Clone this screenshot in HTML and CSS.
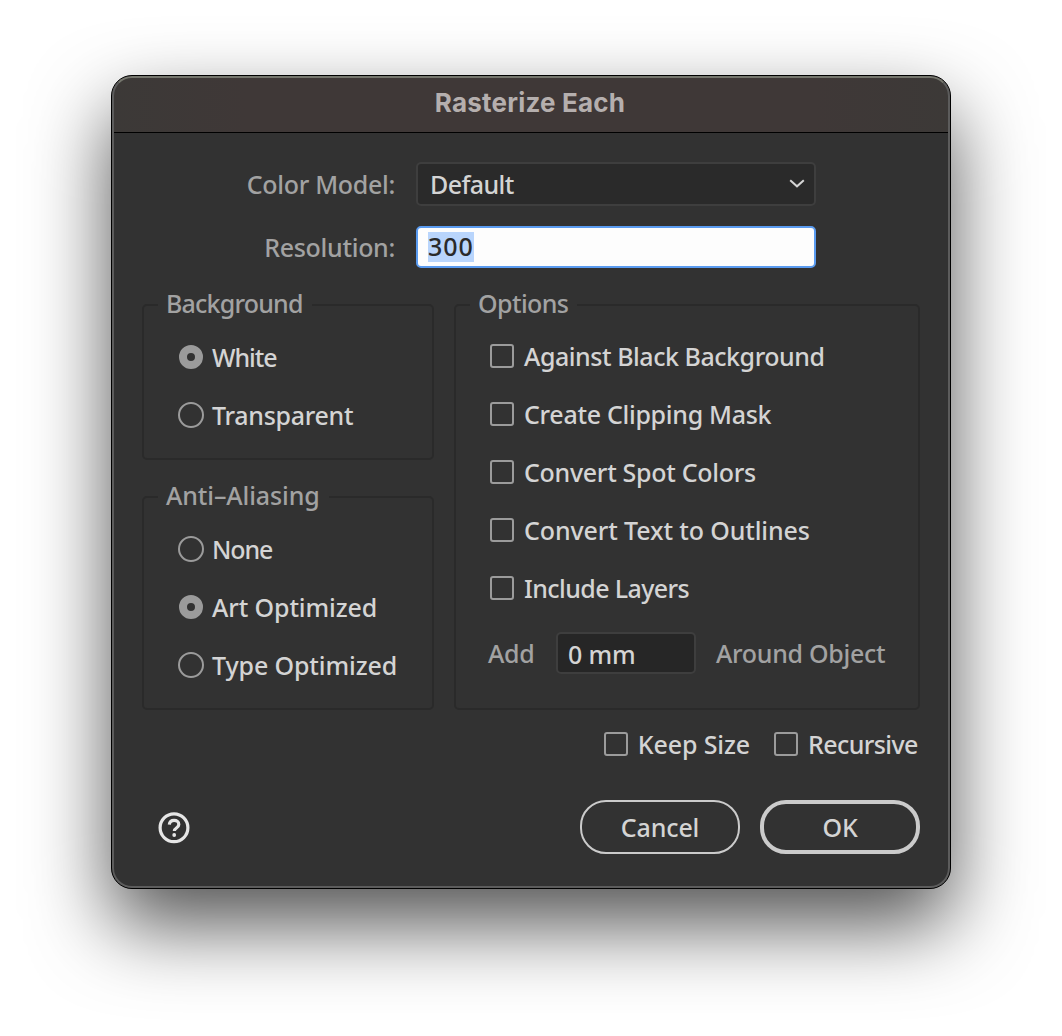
FILE: index.html
```html
<!DOCTYPE html>
<html lang="en">
<head>
<meta charset="utf-8">
<title>Rasterize Each</title>
<link rel="stylesheet" href="styles.css">
</head>
<body>
<main class="dialog">
  <header class="titlebar"><h1 class="title">Rasterize Each</h1></header>
  <form class="content">
    <div class="field">
      <span class="field-label">Color Model:</span>
      <div class="select"><span class="tighter">Default</span>
        <svg class="chevron" viewBox="0 0 16 10" width="16" height="10"><path d="M1.200 1.200 8 7.300 14.800 1.200"/></svg>
      </div>
    </div>
    <div class="field field-resolution">
      <span class="field-label">Resolution:</span>
      <div class="input input-focused"><span class="selection">300</span></div>
    </div>
    <div class="groups">
      <div class="column">
        <fieldset class="group group-background">
          <legend class="tightest">Background</legend>
          <label class="row"><i class="radio radio-on"></i><span class="narrow">White</span></label>
          <label class="row"><i class="radio"></i><span>Transparent</span></label>
        </fieldset>
        <fieldset class="group group-aliasing">
          <legend class="even">Anti–Aliasing</legend>
          <label class="row"><i class="radio"></i><span class="narrow">None</span></label>
          <label class="row"><i class="radio radio-on"></i><span class="even">Art Optimized</span></label>
          <label class="row"><i class="radio"></i><span class="even">Type Optimized</span></label>
        </fieldset>
      </div>
      <fieldset class="group group-options">
        <legend class="tighter">Options</legend>
        <label class="row"><i class="check"></i><span class="tight">Against Black Background</span></label>
        <label class="row"><i class="check"></i><span>Create Clipping Mask</span></label>
        <label class="row"><i class="check"></i><span>Convert Spot Colors</span></label>
        <label class="row"><i class="check"></i><span class="even">Convert Text to Outlines</span></label>
        <label class="row"><i class="check"></i><span class="tighter">Include Layers</span></label>
        <div class="padding-row">
          <span class="add">Add</span>
          <div class="input input-size even">0 mm</div>
          <span class="around">Around Object</span>
        </div>
      </fieldset>
    </div>
    <div class="extras">
      <label class="extra"><i class="check"></i><span class="even">Keep Size</span></label>
      <label class="extra"><i class="check"></i><span class="tighter recursive">Recursive</span></label>
    </div>
    <footer class="actions">
      <svg class="help" viewBox="0 0 34 34" width="34" height="34"><circle cx="17" cy="17.800" r="13.900"/><path d="M12.300 14.600c.3-2.900 2.200-4.200 4.800-4.200 2.700 0 4.700 1.500 4.700 4 0 3.800-4.500 3.300-4.500 6.600"/><circle class="dot" cx="17.200" cy="25" r="1.900"/></svg>
      <div class="button even">Cancel</div>
      <div class="button button-primary even">OK</div>
    </footer>
  </form>
</main>
</body>
</html>
```
FILE: styles.css
```css
* { box-sizing: border-box; }
body {
  margin: 0;
  width: 1062px;
  height: 1036px;
  padding: 75px 111px;
  overflow: hidden;
  background: #fff;
  font-family: "Noto Sans", sans-serif;
  font-size: 25px;
  font-weight: 500;
  line-height: 32px;
  letter-spacing: -.3px;
  color: #d4d4d4;
  white-space: nowrap;
}
.even { letter-spacing: -.12px; }
.tight { letter-spacing: -.46px; }
.tighter { letter-spacing: -.6px; }
.tightest { letter-spacing: -.8px; }
.narrow { letter-spacing: -1.1px; }
.dialog {
  position: relative;
  width: 840px;
  height: 814px;
  border: 1px solid #000;
  border-radius: 21px;
  background: #323232;
  overflow: hidden;
  box-shadow: 0 36px 80px rgba(0, 0, 0, .68);
}
/* light rim just inside the window edge */
.dialog::after {
  content: "";
  position: absolute;
  inset: 0;
  border: 2px solid #5c5c5c;
  border-top-color: #75766d;
  border-radius: 20px;
  pointer-events: none;
}
.titlebar {
  height: 57px;
  padding-top: 11px;
  border-bottom: 1px solid #000;
  background: linear-gradient(90deg, #3c3937, #3f3837 16%, #3f3837 84%, #3c3937);
}
.title {
  margin: 0;
  padding-right: 2px;
  font: 700 26px/32px Inter, sans-serif;
  letter-spacing: .2px;
  color: #b5afae;
  text-align: center;
}
.content { padding: 29px 30px 0; }
.field { display: flex; height: 44px; align-items: center; }
.field-label { width: 253px; text-align: right; color: #a2a2a2; }
.select, .input {
  display: flex;
  align-items: center;
  border: 2px solid #3e3e3e;
  border-radius: 5px;
  background: #2a2a2a;
}
.select { width: 400px; height: 44px; margin-left: 21px; padding: 0 9px 0 12px; justify-content: space-between; }
.chevron { fill: none; stroke: #d4d4d4; stroke-width: 2; }
.field-resolution { height: 42px; margin-top: 20px; }
.input-focused { width: 400px; height: 42px; margin-left: 21px; padding-left: 10px; border-color: #5a9bf0; background: #fdfdfd; color: #2a2a2a; }
.selection { width: 46px; height: 30px; line-height: 29px; letter-spacing: .9px; background: #b9d5fc; }
.groups { display: flex; gap: 20px; margin-top: 21px; }
.group { width: 292px; min-width: 0; margin: 0; padding: 7px 0 0 34px; border: 2px solid #2a2a2a; border-radius: 5px; }
legend { height: 32px; margin-left: -20px; padding: 0 9px 0 8px; line-height: 29px; color: #a2a2a2; }
.group-background { height: 171px; }
.group-aliasing { height: 229px; margin-top: 21px; }
.group-options { width: 466px; height: 421px; padding-top: 6px; }
.row { display: flex; align-items: center; height: 58px; }
.radio { width: 26px; height: 26px; margin-right: 8px; border: 2px solid #9b9b9b; border-radius: 50%; }
.radio-on { width: 24px; height: 24px; margin: 0 9px 0 1px; border-width: 8px; }
.check { width: 24px; height: 24px; margin-right: 10px; border: 2px solid #9b9b9b; border-radius: 3px; }
.padding-row { display: flex; align-items: center; height: 42px; margin-top: 15px; color: #a2a2a2; }
.add { width: 68px; margin-left: -2px; }
.input-size { width: 140px; height: 42px; margin-right: 20px; padding: 2px 0 0 10px; background: #262626; color: #d4d4d4; }
.extras { display: flex; justify-content: flex-end; gap: 24px; margin-top: 18px; }
.extra { display: flex; align-items: center; height: 32px; }
.recursive { width: 112px; }
.actions { display: flex; align-items: center; height: 54px; margin-top: 40px; gap: 20px; }
.help { margin: 0 auto 0 15px; fill: none; stroke: #e6e6e6; stroke-width: 3.2; }
.help .dot { fill: #e6e6e6; stroke: none; }
.button { display: flex; align-items: center; justify-content: center; width: 160px; height: 54px; border: 2px solid #cbcbcb; border-radius: 26px; }
.button-primary { border-width: 4px; }
```
